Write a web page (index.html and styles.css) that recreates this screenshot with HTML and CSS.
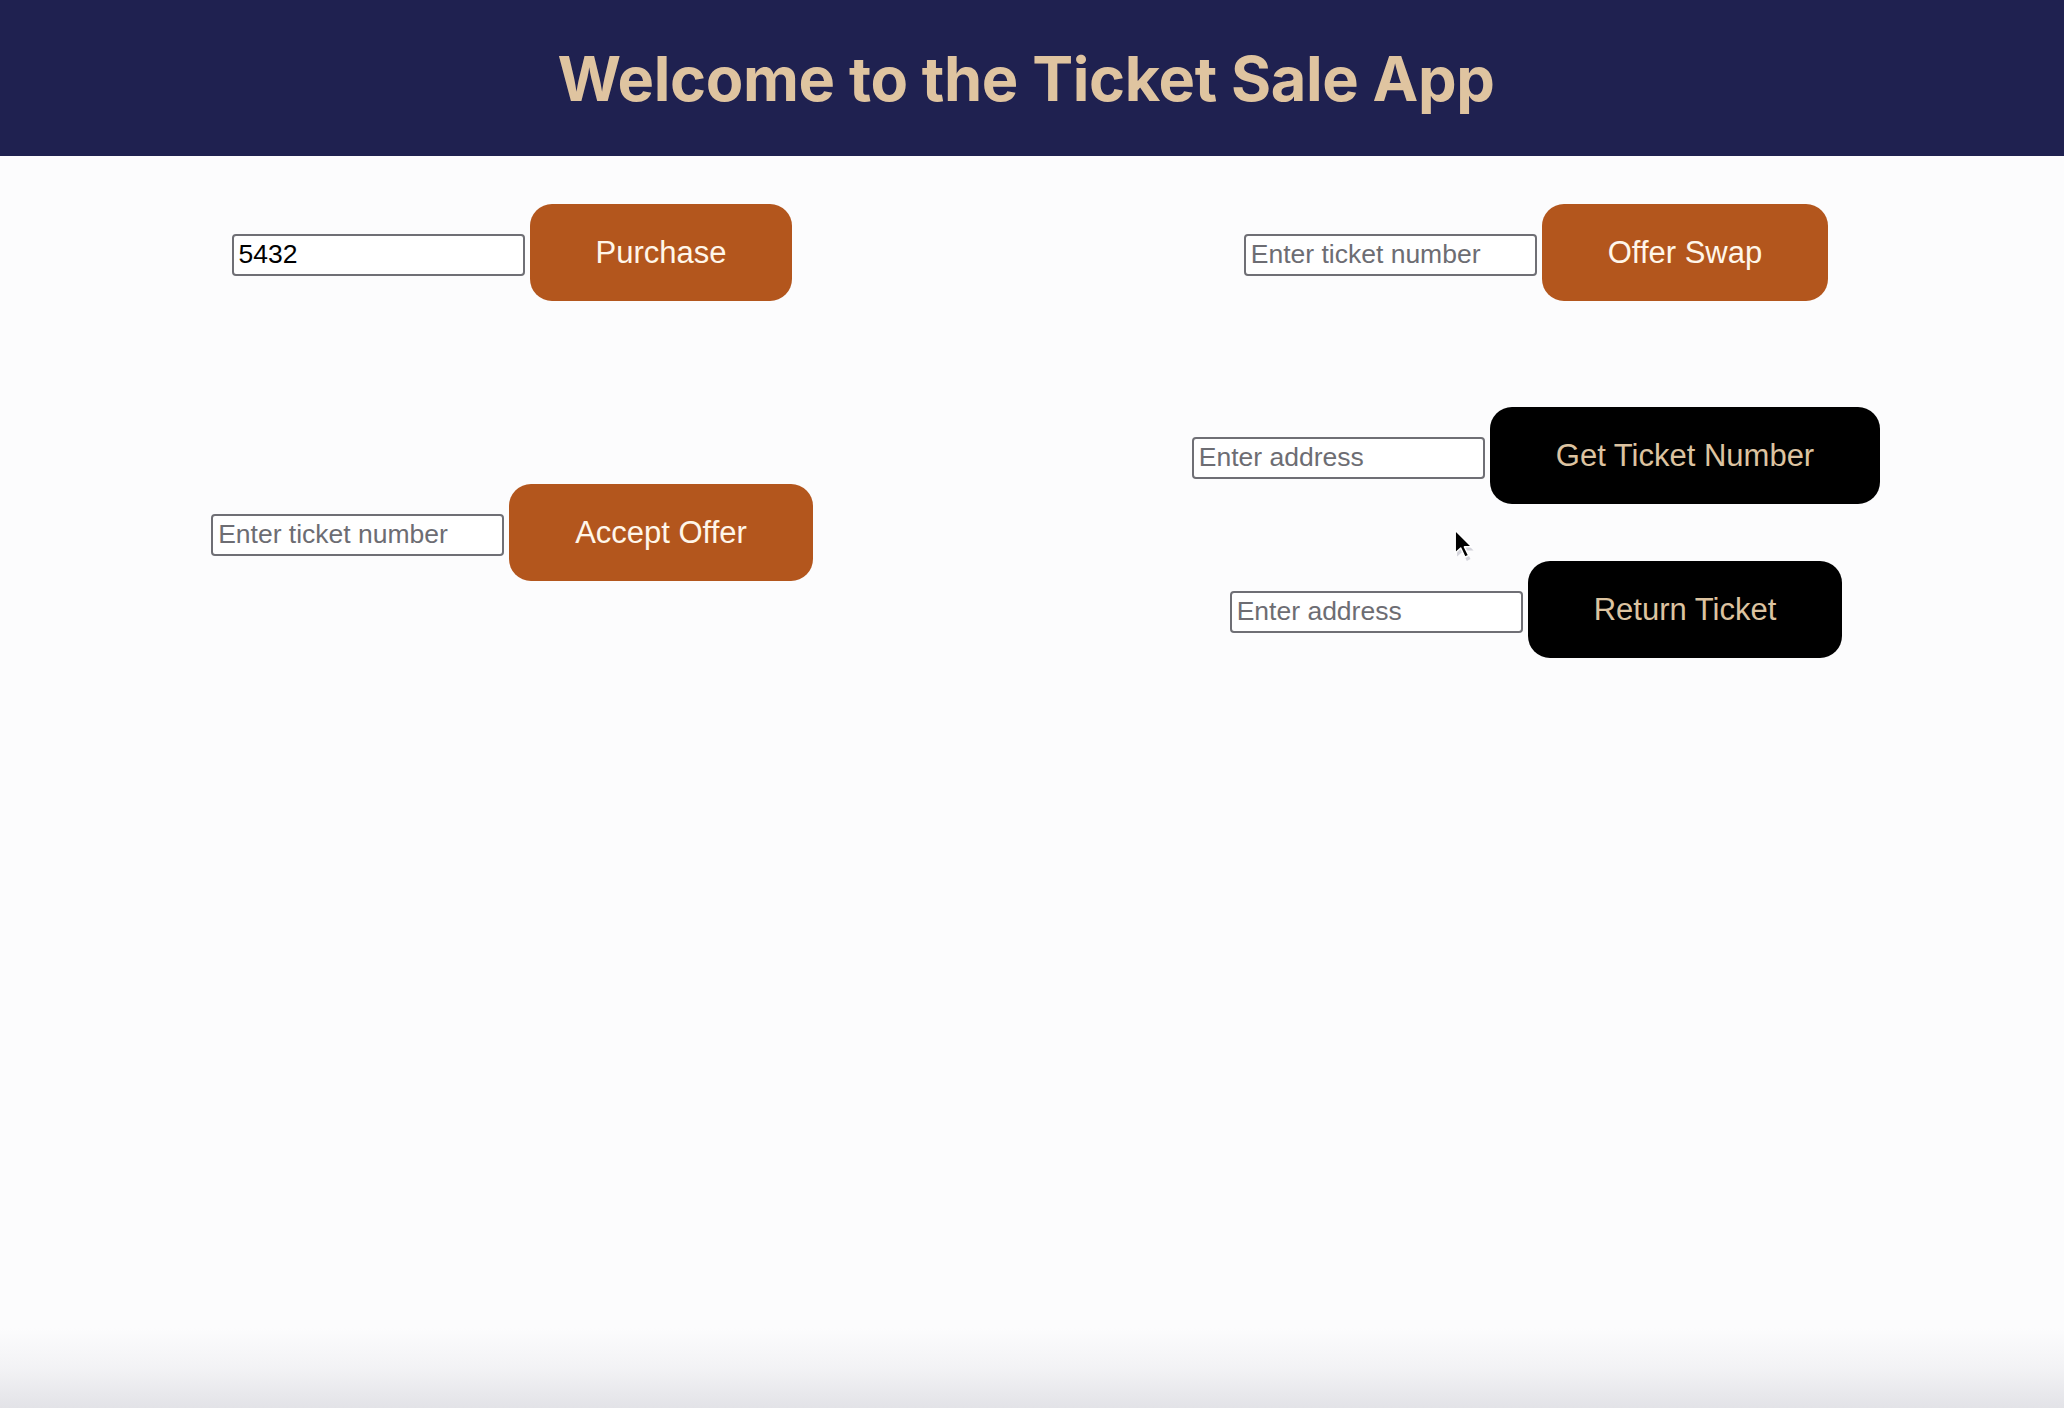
FILE: index.html
```html
<!DOCTYPE html>
<html lang="en">
<head>
<meta charset="utf-8">
<title>Ticket Sale App</title>
<link rel="stylesheet" href="styles.css">
</head>
<body>
<header class="topbar">
  <h1 class="title">Welcome to the Ticket Sale App</h1>
</header>
<main class="board">
  <section class="col">
    <div class="row row-first">
      <input class="field field-value" type="text" value="5432">
      <button class="btn btn-orange">Purchase</button>
    </div>
    <div class="row row-accept">
      <input class="field" type="text" placeholder="Enter ticket number">
      <button class="btn btn-orange">Accept Offer</button>
    </div>
  </section>
  <section class="col">
    <div class="row row-first">
      <input class="field" type="text" placeholder="Enter ticket number">
      <button class="btn btn-orange">Offer Swap</button>
    </div>
    <div class="row row-get">
      <input class="field" type="text" placeholder="Enter address">
      <button class="btn btn-black">Get Ticket Number</button>
    </div>
    <div class="row row-return">
      <input class="field" type="text" placeholder="Enter address">
      <button class="btn btn-black">Return Ticket</button>
    </div>
  </section>
</main>
<svg class="cursor" width="22" height="32" viewBox="0 0 18 26" aria-hidden="true">
  <path d="M2.5 4 L2.5 22.5 L7 18.5 L10.5 26 L13.5 24.5 L10 17.5 L16 17.5 Z" fill="#b9b9c4" opacity="0.6"/>
  <path d="M1 1 L1 19.5 L5.5 15.5 L9 23 L12 21.5 L8.5 14.5 L14.5 14.5 Z" fill="#000" stroke="#fff" stroke-width="1.2" stroke-linejoin="round"/>
</svg>
<div class="shade"></div>
</body>
</html>
```

FILE: styles.css
```css
html, body {
  margin: 0;
  padding: 0;
}

body {
  background: #fcfcfd;
  font-family: "Liberation Sans", Arial, sans-serif;
  min-height: 1408px;
  position: relative;
  overflow: hidden;
}

.topbar {
  height: 156px;
  background: #1f2150;
  display: flex;
  align-items: center;
  justify-content: center;
  padding-right: 12px;
}

.title {
  margin: 0;
  font-family: Inter, "Liberation Sans", sans-serif;
  font-weight: 700;
  font-size: 61.3px;
  line-height: 75px;
  color: #dfc4a0;
  letter-spacing: -0.35px;
  padding-top: 2px;
}

.board {
  width: 2048px;
  display: grid;
  grid-template-columns: 1024px 1024px;
  padding-top: 48px;
}

.col {
  display: flex;
  flex-direction: column;
  align-items: center;
}

.row {
  display: flex;
  align-items: baseline;
  gap: 5px;
}

.row-accept {
  margin-top: 183px;
}

.row-get {
  margin-top: 106px;
}

.row-return {
  margin-top: 57px;
}

.field {
  box-sizing: border-box;
  width: 293px;
  height: 42px;
  border: 2px solid #6f6f75;
  border-radius: 4px;
  padding: 0 5px;
  font-family: "Liberation Sans", Arial, sans-serif;
  font-size: 26.5px;
  color: #000;
  background: #fff;
}

.field::placeholder {
  color: #6d6d73;
}

.btn {
  border: none;
  border-radius: 22px;
  padding: 30px 66px;
  font-family: "Liberation Sans", Arial, sans-serif;
  font-size: 31px;
  line-height: 37px;
  cursor: pointer;
}

.btn-orange {
  background: #b3561d;
  color: #fff6ea;
}

.btn-black {
  background: #000;
  color: #dcc3a0;
}

.cursor {
  position: absolute;
  left: 1454px;
  top: 529px;
}

.shade {
  position: absolute;
  left: 0;
  right: 0;
  bottom: 0;
  height: 80px;
  background: linear-gradient(to bottom, rgba(225, 225, 232, 0) 0%, rgba(225, 225, 230, 0.35) 50%, rgba(218, 218, 224, 0.75) 100%);
  pointer-events: none;
}
```
